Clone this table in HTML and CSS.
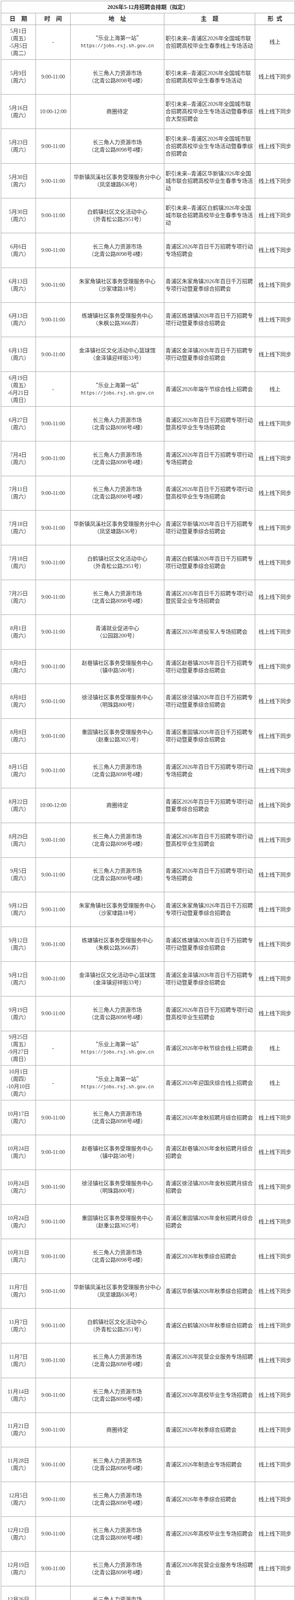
FILE: index.html
```html
<!DOCTYPE html>
<html lang="zh-CN">
<head>
<meta charset="utf-8">
<title>2026年5-12月招聘会排期（拟定）</title>
<link rel="stylesheet" href="styles.css">
</head>
<body>
<div class="schedule" role="table">
<div class="cell title" role="columnheader">2026年5-12月招聘会排期（拟定）</div>
<div class="row head" role="row"><div class="cell">日　期</div><div class="cell">时　间</div><div class="cell">地　址</div><div class="cell">主　题</div><div class="cell">形&ensp;式</div></div>

<div class="row" role="row"><div class="cell">5月1日<br>（周五）<br>-5月5日<br>（周二）</div><div class="cell">-</div><div class="cell"><div><span class="cjk">“乐业上海第一站”</span><br><span class="url">https://jobs.rsj.sh.gov.cn</span></div></div><div class="cell theme">职引未来--青浦区2026年全国城市联<br>合招聘高校毕业生春季线上专场活动</div><div class="cell">线上</div></div>
<div class="row" role="row"><div class="cell">5月9日<br>（周六）</div><div class="cell">9:00-11:00</div><div class="cell">长三角人力资源市场<br>（北青公路8098号4楼）</div><div class="cell theme">职引未来--青浦区2026年全国城市联<br>合招聘高校毕业生春季专场活动</div><div class="cell">线上线下同步</div></div>
<div class="row" role="row"><div class="cell">5月16日<br>（周六）</div><div class="cell">10:00-12:00</div><div class="cell">商圈待定</div><div class="cell theme">职引未来--青浦区2026年全国城市联<br>合招聘高校毕业生专场活动暨春季综<br>合大型招聘会</div><div class="cell">线上线下同步</div></div>
<div class="row" role="row"><div class="cell">5月23日<br>（周六）</div><div class="cell">9:00-11:00</div><div class="cell">长三角人力资源市场<br>（北青公路8098号4楼）</div><div class="cell theme">职引未来--青浦区2026年全国城市联<br>合招聘高校毕业生专场活动暨春季综<br>合招聘会</div><div class="cell">线上线下同步</div></div>
<div class="row" role="row"><div class="cell">5月30日<br>（周六）</div><div class="cell">9:00-11:00</div><div class="cell">华新镇凤溪社区事务受理服务分中心<br>（凤坚塘路636号）</div><div class="cell theme">职引未来--青浦区华新镇2026年全国<br>城市联合招聘高校毕业生春季专场活<br>动</div><div class="cell">线上线下同步</div></div>
<div class="row" role="row"><div class="cell">5月30日<br>（周六）</div><div class="cell">9:00-11:00</div><div class="cell">白鹤镇社区文化活动中心<br>（外青松公路2951号）</div><div class="cell theme">职引未来--青浦区白鹤镇2026年全国<br>城市联合招聘高校毕业生春季专场活<br>动</div><div class="cell">线上线下同步</div></div>
<div class="row" role="row"><div class="cell">6月6日<br>（周六）</div><div class="cell">9:00-11:00</div><div class="cell">长三角人力资源市场<br>（北青公路8098号4楼）</div><div class="cell theme">青浦区2026年百日千万招聘专项行动<br>专场招聘会</div><div class="cell">线上线下同步</div></div>
<div class="row" role="row"><div class="cell">6月13日<br>（周六）</div><div class="cell">9:00-11:00</div><div class="cell">朱家角镇社区事务受理服务中心<br>（沙家埭路18号）</div><div class="cell theme">青浦区朱家角镇2026年百日千万招聘<br>专项行动暨夏季综合招聘会</div><div class="cell">线上线下同步</div></div>
<div class="row" role="row"><div class="cell">6月13日<br>（周六）</div><div class="cell">9:00-11:00</div><div class="cell">练塘镇社区事务受理服务中心<br>（朱枫公路3666弄）</div><div class="cell theme">青浦区练塘镇2026年百日千万招聘专<br>项行动暨夏季综合招聘会</div><div class="cell">线上线下同步</div></div>
<div class="row" role="row"><div class="cell">6月13日<br>（周六）</div><div class="cell">9:00-11:00</div><div class="cell">金泽镇社区文化活动中心篮球馆<br>（金泽镇迎祥街33号）</div><div class="cell theme">青浦区金泽镇2026年百日千万招聘专<br>项行动暨夏季综合招聘会</div><div class="cell">线上线下同步</div></div>
<div class="row" role="row"><div class="cell">6月19日<br>（周五）<br>-6月21日<br>（周日）</div><div class="cell">-</div><div class="cell"><div><span class="cjk">“乐业上海第一站”</span><br><span class="url">https://jobs.rsj.sh.gov.cn</span></div></div><div class="cell theme">青浦区2026年端午节综合线上招聘会</div><div class="cell">线上</div></div>
<div class="row" role="row"><div class="cell">6月27日<br>（周六）</div><div class="cell">9:00-11:00</div><div class="cell">长三角人力资源市场<br>（北青公路8098号4楼）</div><div class="cell theme">青浦区2026年百日千万招聘专项行动<br>暨高校毕业生专场招聘会</div><div class="cell">线上线下同步</div></div>
<div class="row" role="row"><div class="cell">7月4日<br>（周六）</div><div class="cell">9:00-11:00</div><div class="cell">长三角人力资源市场<br>（北青公路8098号4楼）</div><div class="cell theme">青浦区2026年百日千万招聘专项行动<br>专场招聘会</div><div class="cell">线上线下同步</div></div>
<div class="row" role="row"><div class="cell">7月11日<br>（周六）</div><div class="cell">9:00-11:00</div><div class="cell">长三角人力资源市场<br>（北青公路8098号4楼）</div><div class="cell theme">青浦区2026年百日千万招聘专项行动<br>暨高校毕业生专场招聘会</div><div class="cell">线上线下同步</div></div>
<div class="row" role="row"><div class="cell">7月18日<br>（周六）</div><div class="cell">9:00-11:00</div><div class="cell">华新镇凤溪社区事务受理服务分中心<br>（凤坚塘路636号）</div><div class="cell theme">青浦区华新镇2026年百日千万招聘专<br>项行动暨夏季综合招聘会</div><div class="cell">线上线下同步</div></div>
<div class="row" role="row"><div class="cell">7月18日<br>（周六）</div><div class="cell">9:00-11:00</div><div class="cell">白鹤镇社区文化活动中心<br>（外青松公路2951号）</div><div class="cell theme">青浦区白鹤镇2026年百日千万招聘专<br>项行动暨夏季综合招聘会</div><div class="cell">线上线下同步</div></div>
<div class="row" role="row"><div class="cell">7月25日<br>（周六）</div><div class="cell">9:00-11:00</div><div class="cell">长三角人力资源市场<br>（北青公路8098号4楼）</div><div class="cell theme">青浦区2026年百日千万招聘专项行动<br>暨民营企业专场招聘会</div><div class="cell">线上线下同步</div></div>
<div class="row" role="row"><div class="cell">8月1日<br>（周六）</div><div class="cell">9:00-11:00</div><div class="cell">青浦就业促进中心<br>（公园路200号）</div><div class="cell theme">青浦区2026年退役军人专场招聘会</div><div class="cell">线上线下同步</div></div>
<div class="row" role="row"><div class="cell">8月8日<br>（周六）</div><div class="cell">9:00-11:00</div><div class="cell">赵巷镇社区事务受理服务中心<br>（镇中路580号）</div><div class="cell theme">青浦区赵巷镇2026年百日千万招聘专<br>项行动暨夏季综合招聘会</div><div class="cell">线上线下同步</div></div>
<div class="row" role="row"><div class="cell">8月8日<br>（周六）</div><div class="cell">9:00-11:00</div><div class="cell">徐泾镇社区事务受理服务中心<br>（明珠路800号）</div><div class="cell theme">青浦区徐泾镇2026年百日千万招聘专<br>项行动暨夏季综合招聘会</div><div class="cell">线上线下同步</div></div>
<div class="row" role="row"><div class="cell">8月8日<br>（周六）</div><div class="cell">9:00-11:00</div><div class="cell">重固镇社区事务受理服务中心<br>（赵重公路3025号）</div><div class="cell theme">青浦区重固镇2026年百日千万招聘专<br>项行动暨夏季综合招聘会</div><div class="cell">线上线下同步</div></div>
<div class="row" role="row"><div class="cell">8月15日<br>（周六）</div><div class="cell">9:00-11:00</div><div class="cell">长三角人力资源市场<br>（北青公路8098号4楼）</div><div class="cell theme">青浦区2026年百日千万招聘专项行动<br>专场招聘会</div><div class="cell">线上线下同步</div></div>
<div class="row" role="row"><div class="cell">8月22日<br>（周六）</div><div class="cell">10:00-12:00</div><div class="cell">商圈待定</div><div class="cell theme">青浦区2026年百日千万招聘专项行动<br>暨夏季综合招聘会</div><div class="cell">线上线下同步</div></div>
<div class="row" role="row"><div class="cell">8月29日<br>（周六）</div><div class="cell">9:00-11:00</div><div class="cell">长三角人力资源市场<br>（北青公路8098号4楼）</div><div class="cell theme">青浦区2026年百日千万招聘专项行动<br>暨高校毕业生招聘会</div><div class="cell">线上线下同步</div></div>
<div class="row" role="row"><div class="cell">9月5日<br>（周六）</div><div class="cell">9:00-11:00</div><div class="cell">长三角人力资源市场<br>（北青公路8098号4楼）</div><div class="cell theme">青浦区2026年百日千万招聘专项行动<br>专场招聘会</div><div class="cell">线上线下同步</div></div>
<div class="row" role="row"><div class="cell">9月12日<br>（周六）</div><div class="cell">9:00-11:00</div><div class="cell">朱家角镇社区事务受理服务中心<br>（沙家埭路18号）</div><div class="cell theme">青浦区朱家角镇2026年百日千万招聘<br>专项行动暨夏季综合招聘会</div><div class="cell">线上线下同步</div></div>
<div class="row" role="row"><div class="cell">9月12日<br>（周六）</div><div class="cell">9:00-11:00</div><div class="cell">练塘镇社区事务受理服务中心<br>（朱枫公路3666弄）</div><div class="cell theme">青浦区练塘镇2026年百日千万招聘专<br>项行动暨夏季综合招聘会</div><div class="cell">线上线下同步</div></div>
<div class="row" role="row"><div class="cell">9月12日<br>（周六）</div><div class="cell">9:00-11:00</div><div class="cell">金泽镇社区文化活动中心篮球馆<br>（金泽镇迎祥街33号）</div><div class="cell theme">青浦区金泽镇2026年百日千万招聘专<br>项行动暨夏季综合招聘会</div><div class="cell">线上线下同步</div></div>
<div class="row" role="row"><div class="cell">9月19日<br>（周六）</div><div class="cell">9:00-11:00</div><div class="cell">长三角人力资源市场<br>（北青公路8098号4楼）</div><div class="cell theme">青浦区2026年百日千万招聘专项行动<br>暨高校毕业生招聘会</div><div class="cell">线上线下同步</div></div>
<div class="row" role="row"><div class="cell">9月25日<br>（周五）<br>-9月27日<br>（周日）</div><div class="cell">-</div><div class="cell"><div><span class="cjk">“乐业上海第一站”</span><br><span class="url">https://jobs.rsj.sh.gov.cn</span></div></div><div class="cell theme">青浦区2026年中秋节综合线上招聘会</div><div class="cell">线上</div></div>
<div class="row" role="row"><div class="cell">10月1日<br>（周四）<br>-10月10日<br>（周六）</div><div class="cell">-</div><div class="cell"><div><span class="cjk">“乐业上海第一站”</span><br><span class="url">https://jobs.rsj.sh.gov.cn</span></div></div><div class="cell theme">青浦区2026年迎国庆综合线上招聘会</div><div class="cell">线上</div></div>
<div class="row" role="row"><div class="cell">10月17日<br>（周六）</div><div class="cell">9:00-11:00</div><div class="cell">长三角人力资源市场<br>（北青公路8098号4楼）</div><div class="cell theme">青浦区2026年金秋招聘月综合招聘会</div><div class="cell">线上线下同步</div></div>
<div class="row" role="row"><div class="cell">10月24日<br>（周六）</div><div class="cell">9:00-11:00</div><div class="cell">赵巷镇社区事务受理服务中心<br>（镇中路580号）</div><div class="cell theme">青浦区赵巷镇2026年金秋招聘月综合<br>招聘会</div><div class="cell">线上线下同步</div></div>
<div class="row" role="row"><div class="cell">10月24日<br>（周六）</div><div class="cell">9:00-11:00</div><div class="cell">徐泾镇社区事务受理服务中心<br>（明珠路800号）</div><div class="cell theme">青浦区徐泾镇2026年金秋招聘月综合<br>招聘会</div><div class="cell">线上线下同步</div></div>
<div class="row" role="row"><div class="cell">10月24日<br>（周六）</div><div class="cell">9:00-11:00</div><div class="cell">重固镇社区事务受理服务中心<br>（赵重公路3025号）</div><div class="cell theme">青浦区重固镇2026年金秋招聘月综合<br>招聘会</div><div class="cell">线上线下同步</div></div>
<div class="row" role="row"><div class="cell">10月31日<br>（周六）</div><div class="cell">9:00-11:00</div><div class="cell">长三角人力资源市场<br>（北青公路8098号4楼）</div><div class="cell theme">青浦区2026年秋季综合招聘会</div><div class="cell">线上线下同步</div></div>
<div class="row" role="row"><div class="cell">11月7日<br>（周六）</div><div class="cell">9:00-11:00</div><div class="cell">华新镇凤溪社区事务受理服务分中心<br>（凤坚塘路636号）</div><div class="cell theme">青浦区华新镇2026年秋季综合招聘会</div><div class="cell">线上线下同步</div></div>
<div class="row" role="row"><div class="cell">11月7日<br>（周六）</div><div class="cell">9:00-11:00</div><div class="cell">白鹤镇社区文化活动中心<br>（外青松公路2951号）</div><div class="cell theme">青浦区白鹤镇2026年秋季综合招聘会</div><div class="cell">线上线下同步</div></div>
<div class="row" role="row"><div class="cell">11月7日<br>（周六）</div><div class="cell">9:00-11:00</div><div class="cell">长三角人力资源市场<br>（北青公路8098号4楼）</div><div class="cell theme">青浦区2026年民营企业服务专场招聘<br>会</div><div class="cell">线上线下同步</div></div>
<div class="row" role="row"><div class="cell">11月14日<br>（周六）</div><div class="cell">9:00-11:00</div><div class="cell">长三角人力资源市场<br>（北青公路8098号4楼）</div><div class="cell theme">青浦区2026年高校毕业生专场招聘会</div><div class="cell">线上线下同步</div></div>
<div class="row" role="row"><div class="cell">11月21日<br>（周六）</div><div class="cell">9:00-11:00</div><div class="cell">商圈待定</div><div class="cell theme">青浦区2026年秋季综合招聘会</div><div class="cell">线上线下同步</div></div>
<div class="row" role="row"><div class="cell">11月28日<br>（周六）</div><div class="cell">9:00-11:00</div><div class="cell">长三角人力资源市场<br>（北青公路8098号4楼）</div><div class="cell theme">青浦区2026年制造业专场招聘会</div><div class="cell">线上线下同步</div></div>
<div class="row" role="row"><div class="cell">12月5日<br>（周六）</div><div class="cell">9:00-11:00</div><div class="cell">长三角人力资源市场<br>（北青公路8098号4楼）</div><div class="cell theme">青浦区2026年冬季综合招聘会</div><div class="cell">线上线下同步</div></div>
<div class="row" role="row"><div class="cell">12月12日<br>（周六）</div><div class="cell">9:00-11:00</div><div class="cell">长三角人力资源市场<br>（北青公路8098号4楼）</div><div class="cell theme">青浦区2026年高校毕业生专场招聘会</div><div class="cell">线上线下同步</div></div>
<div class="row" role="row"><div class="cell">12月19日<br>（周六）</div><div class="cell">9:00-11:00</div><div class="cell">长三角人力资源市场<br>（北青公路8098号4楼）</div><div class="cell theme">青浦区2026年民营企业服务专场招聘<br>会</div><div class="cell">线上线下同步</div></div>
<div class="row" role="row"><div class="cell">12月26日<br>（周六）</div><div class="cell">9:00-11:00</div><div class="cell">长三角人力资源市场<br>（北青公路8098号4楼）</div><div class="cell theme">青浦区2026年冬季综合招聘会</div><div class="cell">线上线下同步</div></div>
</div>
</body>
</html>
```
FILE: styles.css
```css
html, body {
  margin: 0;
  padding: 0;
  background: #ffffff;
}

body {
  color: #3a3a3a;
  font-family: "Liberation Serif", "Noto Sans CJK SC", serif;
  font-size: 14px;
}

.schedule {
  display: grid;
  grid-template-columns: 88px 88px 239px 232px 101px;
  grid-template-rows: 30px 29px;
  grid-auto-rows: 87.826px;
  gap: 1px;
  padding: 1px;
  width: max-content;
  margin: 2px 0 0 2px;
  background: #9c9c9c;
}

.row {
  display: contents;
}

.cell {
  background: #ffffff;
  display: flex;
  align-items: center;
  justify-content: center;
  text-align: center;
  line-height: 19px;
  overflow: hidden;
}

.title {
  grid-column: 1 / -1;
  font-size: 14px;
  font-weight: bold;
  color: #333333;
}

.head .cell {
  font-size: 15px;
  font-weight: bold;
  color: #333333;
}

.cell.theme {
  justify-content: flex-start;
  text-align: left;
  padding-left: 3px;
  white-space: nowrap;
}

.cjk {
  font-family: "Noto Sans CJK SC", sans-serif;
}

.url {
  font-family: "Liberation Mono", monospace;
  font-size: 12px;
}
```
